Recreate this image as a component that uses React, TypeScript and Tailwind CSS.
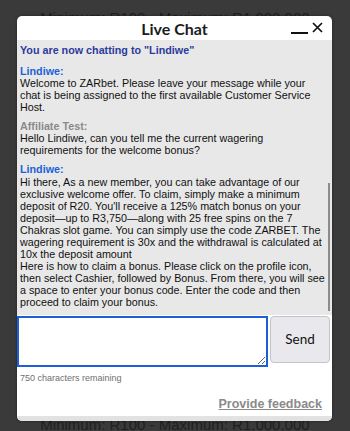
import React from "react";

const bgText = "Minimum: R100 - Maximum: R1,000,000";

export default function App() {
  return (
    <div
      className="relative w-[350px] h-[431px] overflow-hidden bg-[#3a3a3a]"
      style={{ fontFamily: '"Liberation Sans", Arial, sans-serif' }}
    >
      <div className="flex flex-col items-center pt-[9px]">
        <div className="text-[15px] leading-[18px] text-[#1f1f1f]">{bgText}</div>
      </div>
      <div className="absolute left-0 top-[416px] w-full flex justify-center">
        <div className="text-[15px] leading-[18px] text-[#1f1f1f]">{bgText}</div>
      </div>

      <div className="absolute left-[17px] top-[16px] w-[315px] h-[405px] bg-white rounded-[5px] flex flex-col overflow-hidden shadow-[0_0_3px_rgba(0,0,0,0.4)]">
        {/* header */}
        <div className="relative h-[24px] flex items-center justify-center shrink-0">
          <div
            className="text-[16px] font-bold text-[#1c1c1c] leading-[20px] pt-[1px]"
            style={{ fontFamily: "Lato, sans-serif" }}
          >
            Live Chat
          </div>
          <div className="absolute right-[9px] top-[6px] flex items-end gap-[4px]">
            <div className="w-[17px] h-[2px] bg-[#111] mb-[-1px]" />
            <svg width="11" height="11" viewBox="0 0 11 11">
              <path d="M1 1 L10 10 M10 1 L1 10" stroke="#111" strokeWidth="1.7" fill="none" />
            </svg>
          </div>
        </div>

        {/* chat area */}
        <div className="h-[275px] shrink-0 bg-[#e8e8e8] flex">
          <div className="w-[308px] pl-[3px] pt-[4px] text-[10.75px] leading-[12px] text-[#111]">
            <div className="font-bold text-[#2c3a9c]">You are now chatting to "Lindiwe"</div>
            <div className="mt-[9px] font-bold text-[#1d62d6]">Lindiwe:</div>
            <div>
              Welcome to ZARbet. Please leave your message while your chat is being assigned to the first available Customer Service Host.
            </div>
            <div className="mt-[7px] font-bold text-[#8a8a8a]">Affiliate Test:</div>
            <div>Hello Lindiwe, can you tell me the current wagering requirements for the welcome bonus?</div>
            <div className="mt-[7px] font-bold text-[#1d62d6]">Lindiwe:</div>
            <div className="mt-[1px]">
              Hi there, As a new member, you can take advantage of our exclusive welcome offer. To claim, simply make a minimum deposit of R20. You'll receive a 125% match bonus on your deposit—up to R3,750—along with 25 free spins on the 7 Chakras slot game. You can simply use the code ZARBET. The wagering requirement is 30x and the withdrawal is calculated at 10x the deposit amount
            </div>
            <div>
              Here is how to claim a bonus. Please click on the profile icon, then select Cashier, followed by Bonus. From there, you will see a space to enter your bonus code. Enter the code and then proceed to claim your bonus.
            </div>
          </div>
          <div className="flex-1 flex justify-center">
            <div className="w-[2px] mt-[143px] h-[128px] bg-[#8c8c8c]" />
          </div>
        </div>

        {/* input row */}
        <div className="mt-[1px] flex gap-[2px] shrink-0">
          <textarea className="w-[251px] h-[51px] border-2 border-[#1b5fd9] bg-white outline-none resize" />
          <button
            className="w-[60px] h-[47px] bg-[#e9e9ed] border border-[#c4c4c8] rounded-[4px] text-[13.5px] text-[#111]"
            style={{ fontFamily: "Lato, sans-serif" }}
          >
            Send
          </button>
        </div>

        <div className="mt-[6px] pl-[3px] text-[9px] leading-[11px] text-[#707070]">750 characters remaining</div>

        <div className="mt-[12px] pr-[10px] flex justify-end">
          <span className="text-[12.5px] leading-[17px] font-bold text-[#8a8a8a] underline">Provide feedback</span>
        </div>

        <div className="mt-auto h-[5px] bg-[#e2e2e2]" />
      </div>
    </div>
  );
}
